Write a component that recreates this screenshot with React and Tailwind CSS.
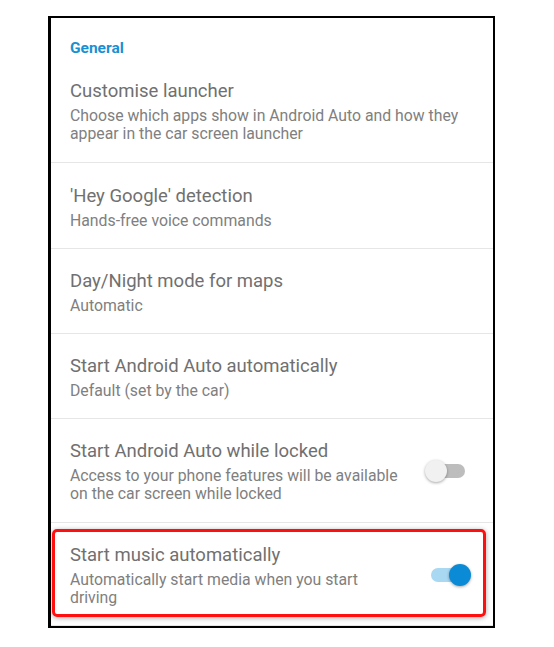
import React from "react";

const font = { fontFamily: "Roboto, 'Noto Sans', Arial, sans-serif" };

function Toggle({ on }) {
  return (
    <div className="relative flex-none w-[47px] h-[22px]">
      <div
        className={
          "absolute left-[7px] top-[4px] w-[34px] h-[14px] rounded-full " +
          (on ? "bg-[#a9d8f2]" : "bg-[#bdbdbd]")
        }
      />
      <div
        className={
          "absolute top-0 w-[22px] h-[22px] rounded-full shadow-[0_1px_3px_rgba(0,0,0,0.35)] " +
          (on ? "left-[25px] bg-[#0b8bd6]" : "left-[1px] bg-[#f1f1f1]")
        }
      />
    </div>
  );
}

function Row({ title, sub, toggle, pad, highlight }) {
  return (
    <div className={"relative flex items-center pl-[19px] pr-[22px] " + pad}>
      <div className={toggle === undefined ? "flex-1 max-w-[402px]" : "flex-1 max-w-[336px]"}>
        <div className="text-[18.5px] leading-[24px] text-[#707070]">{title}</div>
        <div className="mt-[4px] text-[15.8px] leading-[18px] text-[#808080]">{sub}</div>
      </div>
      {toggle !== undefined && (
        <div className="ml-auto">
          <Toggle on={toggle} />
        </div>
      )}
      {highlight && (
        <div className="pointer-events-none absolute left-[1px] right-[7px] top-[6px] bottom-[8px] rounded-[5px] border-[3px] border-[#ff1010] shadow-[0_1px_5px_rgba(0,0,0,0.35)]" />
      )}
    </div>
  );
}

export default function App() {
  return (
    <div className="w-[554px] h-[647px] bg-white" style={font}>
      <div className="ml-[48px] pt-[16px] w-[447px]">
        <div className="border-black border-t-2 border-r-2 border-b-2 border-l-[3px] bg-white">
          <div className="pl-[19px] pt-[20px] text-[15.5px] leading-[20px] font-bold text-[#1b8fd2]">
            General
          </div>
          <Row
            pad="pt-[21px] pb-[19px]"
            title="Customise launcher"
            sub="Choose which apps show in Android Auto and how they appear in the car screen launcher"
          />
          <Row
            pad="pt-[21px] pb-[18px] border-t border-[#e6e6e6]"
            title="'Hey Google' detection"
            sub="Hands-free voice commands"
          />
          <Row
            pad="pt-[20px] pb-[18px] border-t border-[#e6e6e6]"
            title="Day/Night mode for maps"
            sub="Automatic"
          />
          <Row
            pad="pt-[20px] pb-[18px] border-t border-[#e6e6e6]"
            title="Start Android Auto automatically"
            sub="Default (set by the car)"
          />
          <Row
            pad="pt-[20px] pb-[19px] border-t border-[#e6e6e6]"
            title="Start Android Auto while locked"
            sub="Access to your phone features will be available on the car screen while locked"
            toggle={false}
          />
          <Row
            pad="pt-[20px] pb-[18px] border-t border-[#e6e6e6]"
            title="Start music automatically"
            sub="Automatically start media when you start driving"
            toggle={true}
            highlight
          />
          <div className="h-px bg-[#e6e6e6]" />
        </div>
      </div>
    </div>
  );
}
